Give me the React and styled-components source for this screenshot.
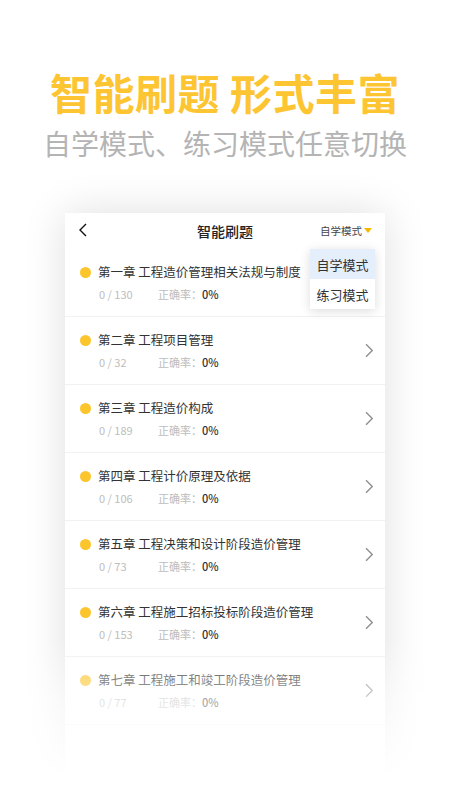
import React from "react";
import styled, { createGlobalStyle } from "styled-components";

const GlobalStyle = createGlobalStyle`
  html, body {
    margin: 0;
    padding: 0;
    background: #ffffff;
  }
  body {
    font-family: "Noto Sans CJK SC", "Noto Sans", sans-serif;
  }
`;

const Page = styled.div`
  position: relative;
  width: 450px;
  height: 800px;
  overflow: hidden;
  background: #ffffff;
`;

const Hero = styled.div`
  display: flex;
  flex-direction: column;
  align-items: center;
  padding-top: 68px;
`;

const Headline = styled.h1`
  margin: 0;
  font-size: 42px;
  line-height: 48px;
  font-weight: 700;
  color: #fdc532;
  letter-spacing: 0.5px;
  white-space: pre;
`;

const SubHeadline = styled.p`
  margin: 9px 0 0;
  font-size: 28px;
  line-height: 36px;
  font-weight: 400;
  color: #b4b4b4;
`;

const Card = styled.div`
  position: relative;
  width: 320px;
  margin: 52px auto 0;
  background: #ffffff;
  box-shadow: 0 0 40px rgba(0, 0, 0, 0.13);
  padding-bottom: 80px;
`;

const TopBar = styled.div`
  height: 36px;
  display: flex;
  align-items: center;
  justify-content: center;
  position: relative;
`;

const BackButton = styled.span`
  position: absolute;
  left: 14px;
  top: 10px;
  display: flex;
`;

const BarTitle = styled.span`
  font-size: 14px;
  font-weight: 500;
  color: #222;
`;

const ModeSwitch = styled.span`
  position: absolute;
  right: 13px;
  top: 10px;
  display: flex;
  align-items: center;
  gap: 2px;
  font-size: 10.5px;
  color: #444;
`;

const Caret = styled.span`
  width: 0;
  height: 0;
  border-left: 4px solid transparent;
  border-right: 4px solid transparent;
  border-top: 5px solid #f6b900;
`;

const Menu = styled.div`
  position: absolute;
  top: 36px;
  left: 245px;
  width: 65px;
  background: #fff;
  box-shadow: 0 2px 10px rgba(0, 0, 0, 0.14);
  z-index: 2;
`;

const MenuItem = styled.div`
  height: 30px;
  display: flex;
  align-items: center;
  justify-content: center;
  font-size: 13px;
  color: #333;
  background: ${(p) => (p.$active ? "#e5eefb" : "#ffffff")};
`;

const Row = styled.div`
  height: 67px;
  display: flex;
  align-items: center;
  padding: 0 12px 0 15px;
  border-bottom: 1px solid #f1f1f1;
`;

const RowBody = styled.div`
  flex: 1;
  display: flex;
  flex-direction: column;
  gap: 5px;
`;

const RowTitle = styled.div`
  display: flex;
  align-items: center;
  gap: 7px;
  font-size: 12.5px;
  line-height: 18px;
  color: #333;
`;

const Dot = styled.span`
  width: 11px;
  height: 11px;
  border-radius: 50%;
  background: #fcc52c;
`;

const Stats = styled.div`
  display: flex;
  padding-left: 19px;
  font-size: 11px;
  line-height: 16px;
  color: #bdbdbd;
`;

const Count = styled.span`
  width: 59px;
`;

const Rate = styled.b`
  font-weight: 500;
  color: #333;
`;

const Fade = styled.div`
  position: absolute;
  left: 0;
  right: 0;
  top: 640px;
  height: 160px;
  background: linear-gradient(
    to bottom,
    rgba(255, 255, 255, 0) 0%,
    rgba(255, 255, 255, 0.55) 35%,
    rgba(255, 255, 255, 1) 85%
  );
`;

const Chevron = ({ size = 14, color = "#999", width = 1.3 }) => (
  <svg width={size * 0.55} height={size} viewBox="0 0 8 14" fill="none">
    <path d="M1 1l6 6-6 6" stroke={color} strokeWidth={width} />
  </svg>
);

const chapters = [
  { title: "第一章 工程造价管理相关法规与制度", total: 130 },
  { title: "第二章 工程项目管理", total: 32 },
  { title: "第三章 工程造价构成", total: 189 },
  { title: "第四章 工程计价原理及依据", total: 106 },
  { title: "第五章 工程决策和设计阶段造价管理", total: 73 },
  { title: "第六章 工程施工招标投标阶段造价管理", total: 153 },
  { title: "第七章 工程施工和竣工阶段造价管理", total: 77 },
];

const App = () => {
  return (
    <Page>
      <GlobalStyle />
      <Hero>
        <Headline>{"智能刷题 形式丰富"}</Headline>
        <SubHeadline>自学模式、练习模式任意切换</SubHeadline>
      </Hero>
      <Card>
        <TopBar>
          <BackButton>
            <svg width="8" height="14" viewBox="0 0 8 14" fill="none">
              <path d="M7 1L1 7l6 6" stroke="#111" strokeWidth="1.4" />
            </svg>
          </BackButton>
          <BarTitle>智能刷题</BarTitle>
          <ModeSwitch>
            自学模式
            <Caret />
          </ModeSwitch>
        </TopBar>
        <Menu>
          <MenuItem $active>自学模式</MenuItem>
          <MenuItem>练习模式</MenuItem>
        </Menu>
        {chapters.map((c, i) => (
          <Row key={i}>
            <RowBody>
              <RowTitle>
                <Dot />
                {c.title}
              </RowTitle>
              <Stats>
                <Count>0 / {c.total}</Count>
                <span>
                  正确率：<Rate>0%</Rate>
                </span>
              </Stats>
            </RowBody>
            {i > 0 && <Chevron size={15} color="#8f8f8f" />}
          </Row>
        ))}
      </Card>
      <Fade />
    </Page>
  );
};

export default App;
